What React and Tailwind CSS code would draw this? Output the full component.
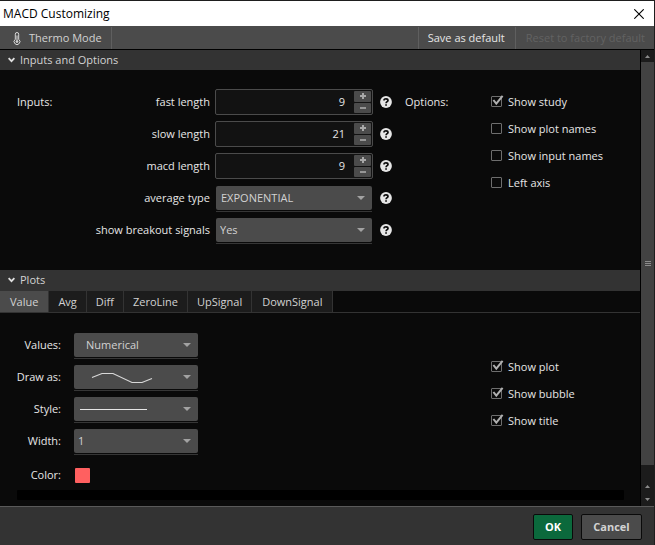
import { useState } from 'react';

const TABS = ['Value', 'Avg', 'Diff', 'ZeroLine', 'UpSignal', 'DownSignal'];

function Section({ title, children }) {
  return (
    <section>
      <h2 className="flex h-5 items-center gap-[5px] bg-[#333333] pl-2 text-[#d2d2d2]">
        <svg width="7" height="6" viewBox="0 0 7 6" fill="none" stroke="#e0e0e0" strokeWidth="1.8">
          <path d="M0.6 1.2 3.5 4.2 6.4 1.2" />
        </svg>
        {title}
      </h2>
      {children}
    </section>
  );
}

function Arrow() {
  return (
    <svg
      className="pointer-events-none absolute top-3 right-[7px]"
      width="8"
      height="4"
      viewBox="0 0 8 4"
      fill="#a2a2a2"
    >
      <path d="M0 0H8L4 4Z" />
    </svg>
  );
}

function Select({ id, options, drawing, className }) {
  return (
    <div className="relative border-b border-[#363636] pt-0.5 pb-px">
      <select
        id={id}
        className={`block h-6 w-full appearance-none rounded-[2px] bg-[#4b4b4b] text-[#d2d2d2] outline-none ${className || 'pl-[5px]'}`}
      >
        {options.map((option) => (
          <option key={option}>{option}</option>
        ))}
      </select>
      {drawing}
      <Arrow />
    </div>
  );
}

function NumberField({ id, initial }) {
  const [value, setValue] = useState(initial);

  return (
    <div className="flex h-[26px] rounded-[2px] border border-[#4b4b4b] bg-[#121212] p-px">
      <input
        id={id}
        type="text"
        inputMode="numeric"
        value={value}
        onChange={(e) => setValue(Number(e.target.value) || 0)}
        className="min-w-0 flex-1 bg-transparent pr-[9px] text-right text-[#e6e6e6] outline-none"
      />
      <div className="flex w-[17px] flex-col gap-px">
        <button
          type="button"
          aria-label="Increase"
          onClick={() => setValue(value + 1)}
          className="flex flex-1 items-center justify-center rounded-[1px] bg-[#4b4b4b]"
        >
          <svg width="6" height="6" viewBox="0 0 6 6" fill="#a8a8a8">
            <path d="M2 0h2v2h2v2H4v2H2V4H0V2h2z" />
          </svg>
        </button>
        <button
          type="button"
          aria-label="Decrease"
          onClick={() => setValue(value - 1)}
          className="flex flex-1 items-center justify-center rounded-[1px] bg-[#4b4b4b]"
        >
          <svg width="6" height="2" viewBox="0 0 6 2" fill="#969696">
            <path d="M0 0h6v2H0z" />
          </svg>
        </button>
      </div>
    </div>
  );
}

function InputRow({ id, label, children }) {
  return (
    <div className="flex h-8 items-center">
      <label htmlFor={id} className="w-[135px] pr-[5px] text-right whitespace-nowrap">
        {label}
      </label>
      <div className="w-[158px]">{children}</div>
      <button type="button" aria-label={`Help for ${label}`} className="ml-[7px]">
        <svg width="12" height="12" viewBox="0 0 12 12">
          <circle cx="6" cy="6" r="5.9" fill="#e6e6e6" />
          <path
            d="M4 4.6C4 3.3 4.8 2.8 6 2.8s2 .6 2 1.6c0 1.3-1.9 1.2-1.9 2.8"
            fill="none"
            stroke="#0a0a0a"
            strokeWidth="1.7"
          />
          <path d="M5.2 8.2h1.7v1.6H5.2z" fill="#0a0a0a" />
        </svg>
      </button>
    </div>
  );
}

function CheckOption({ label, defaultChecked }) {
  return (
    <label className="flex h-[27px] items-center gap-[6px]">
      <span className="relative block size-[11px]">
        <input
          type="checkbox"
          defaultChecked={defaultChecked}
          className="peer block size-[11px] appearance-none rounded-[1px] border border-[#6e6e6e]"
        />
        <svg
          className="pointer-events-none absolute bottom-0 left-0 hidden peer-checked:block"
          width="13"
          height="12"
          viewBox="0 0 13 12"
          fill="none"
          stroke="#b0b0b0"
          strokeWidth="2"
        >
          <path d="M2.4 5 5.3 8.7 11.6 0.8" />
        </svg>
      </span>
      {label}
    </label>
  );
}

function PlotRow({ id, label, children }) {
  return (
    <div className="flex h-8 items-center">
      <label htmlFor={id} className="w-[61px] text-right">
        {label}
      </label>
      <div className="ml-[13px] w-[124px]">{children}</div>
    </div>
  );
}

function ScrollArrow({ down }) {
  return (
    <svg width="5" height="3" viewBox="0 0 5 3" fill="#8c8c8c">
      <path d={down ? 'M0 0H5L2.5 3Z' : 'M0 3H5L2.5 0Z'} />
    </svg>
  );
}

function ScrollBar() {
  return (
    <div className="flex w-[13px] shrink-0 flex-col bg-[#1c1c1c]">
      <div className="flex h-3 items-center justify-center">
        <ScrollArrow />
      </div>
      <div className="flex flex-1 flex-col items-center justify-center gap-px bg-[#424242]">
        <span className="h-px w-[6px] bg-[#8c8c8c]" />
        <span className="h-px w-[6px] bg-[#8c8c8c]" />
        <span className="h-px w-[6px] bg-[#8c8c8c]" />
      </div>
      <div className="flex h-[41px] flex-col items-center justify-end gap-[10px] pb-[5px]">
        <ScrollArrow />
        <ScrollArrow down />
      </div>
    </div>
  );
}

function App() {
  const [tab, setTab] = useState('Value');

  return (
    <div className="flex min-h-screen flex-col border-t border-r border-[#1e1e1e] bg-[#0a0a0a] font-['Open_Sans',sans-serif] text-[11px] leading-4 text-[#e6e6e6]">
      <header className="flex h-[25px] items-center justify-between bg-white pr-[10px] pl-[3px] text-black">
        <h1 className="text-[12px]">MACD Customizing</h1>
        <button type="button" aria-label="Close">
          <svg width="10" height="10" viewBox="0 0 10 10" fill="none" stroke="#000" strokeWidth="1.1">
            <path d="M0.3 0.3l9.4 9.4M9.7 0.3l-9.4 9.4" />
          </svg>
        </button>
      </header>

      <div className="flex h-[23px] bg-[#4b4b4b] pt-px">
        <button type="button" className="flex items-center gap-2 border-r border-[#5f5f5f] pr-[9px] pl-[13px] text-[#d2d2d2]">
          <svg width="8" height="13" viewBox="0 0 8 13" fill="none" stroke="#d8d8d8">
            <path d="M2.3 7.3V2.2a1.7 1.7 0 0 1 3.4 0v5.1a2.9 2.9 0 1 1-3.4 0z" />
            <path d="M4 3.5v6" />
            <circle cx="4" cy="9.6" r="0.9" fill="#d8d8d8" />
          </svg>
          Thermo Mode
        </button>
        <button type="button" className="ml-auto border-x border-[#5f5f5f] pr-[10px] pl-[9px] text-[#e6e6e6]">
          Save as default
        </button>
        <button type="button" disabled className="pr-[9px] pl-[10px] text-[#626262]">
          Reset to factory default
        </button>
      </div>

      <div className="flex flex-1 border-t border-black">
        <main className="min-w-0 flex-1 border-r border-black">
          <Section title="Inputs and Options">
            <div className="flex pt-4 pb-6 pl-[17px]">
              <div className="w-[63px] pt-2">Inputs:</div>
              <div>
                <InputRow id="fast" label="fast length">
                  <NumberField id="fast" initial={9} />
                </InputRow>
                <InputRow id="slow" label="slow length">
                  <NumberField id="slow" initial={21} />
                </InputRow>
                <InputRow id="macd" label="macd length">
                  <NumberField id="macd" initial={9} />
                </InputRow>
                <InputRow id="average" label="average type">
                  <div className="px-px">
                    <Select id="average" options={['EXPONENTIAL', 'SIMPLE', 'WEIGHTED']} />
                  </div>
                </InputRow>
                <InputRow id="breakout" label="show breakout signals">
                  <div className="px-px">
                    <Select id="breakout" options={['Yes', 'No']} className="pl-1" />
                  </div>
                </InputRow>
              </div>
              <div className="ml-[13px] w-[86px] pt-2">Options:</div>
              <div className="pt-0.5">
                <CheckOption label="Show study" defaultChecked />
                <CheckOption label="Show plot names" />
                <CheckOption label="Show input names" />
                <CheckOption label="Left axis" />
              </div>
            </div>
          </Section>

          <Section title="Plots">
            <div role="tablist" className="flex h-[23px] border-y border-[#333333]">
              {TABS.map((name) => (
                <button
                  key={name}
                  type="button"
                  role="tab"
                  aria-selected={tab === name}
                  onClick={() => setTab(name)}
                  className={`border-r border-[#333333] px-[9px] text-[#d2d2d2] first:px-[10px] last:px-[10px] ${tab === name ? 'bg-[#4b4b4b]' : 'bg-[#1c1c1c]'}`}
                >
                  {name}
                </button>
              ))}
            </div>

            <div className="flex justify-between pt-4">
              <div>
                <PlotRow id="values" label="Values:">
                  <Select id="values" options={['Numerical', 'Boolean']} className="pl-3" />
                </PlotRow>
                <PlotRow id="draw" label="Draw as:">
                  <Select
                    id="draw"
                    options={['']}
                    drawing={
                      <svg className="pointer-events-none absolute top-[9px] left-[17px]" width="62" height="12" viewBox="0 0 62 12" fill="none" stroke="#d8d8d8" strokeWidth="1.2">
                        <path d="M1 5.5 11 1.5H22L41 10.5H51L61 6.5" />
                      </svg>
                    }
                  />
                </PlotRow>
                <PlotRow id="style" label="Style:">
                  <Select
                    id="style"
                    options={['']}
                    drawing={
                      <svg className="pointer-events-none absolute top-[14px] left-[6px]" width="67" height="1" viewBox="0 0 67 1" fill="#e6e6e6">
                        <path d="M0 0h67v1H0z" />
                      </svg>
                    }
                  />
                </PlotRow>
                <PlotRow id="width" label="Width:">
                  <Select id="width" options={['1', '2', '3', '4', '5']} className="pl-1" />
                </PlotRow>
                <div className="flex h-[33px] items-center pt-[3px]">
                  <span id="color" className="w-[61px] text-right">
                    Color:
                  </span>
                  <button type="button" aria-labelledby="color" className="ml-[14px] size-[15px] rounded-[1px] bg-[#ff6060]" />
                </div>
              </div>
              <div className="w-[149px] pt-6">
                <CheckOption label="Show plot" defaultChecked />
                <CheckOption label="Show bubble" defaultChecked />
                <CheckOption label="Show title" defaultChecked />
              </div>
            </div>
            <div className="mr-4 ml-[17px] h-[10px] rounded-[1px] bg-black" />
          </Section>
        </main>
        <ScrollBar />
      </div>

      <footer className="flex h-[39px] items-center justify-end gap-2 border-t border-[#5a5a5a] bg-[#333333] pt-px pr-3 font-bold">
        <button type="button" className="h-[26px] w-10 rounded-[2px] border border-[#0a0a0a] bg-[#0b693c] text-white">
          OK
        </button>
        <button type="button" className="h-[26px] w-[61px] rounded-[2px] border border-[#0a0a0a] bg-[#4b4b4b] text-[#d2d2d2]">
          Cancel
        </button>
      </footer>
    </div>
  );
}

export default App;
